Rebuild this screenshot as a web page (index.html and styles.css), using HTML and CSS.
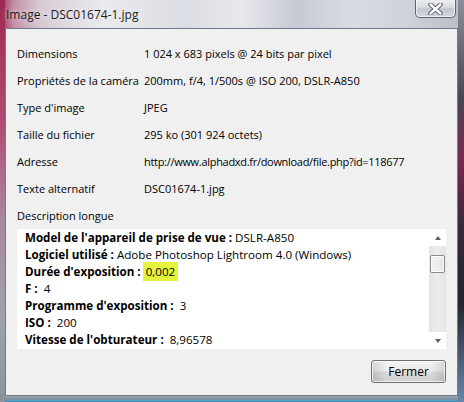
FILE: index.html
```html
<!DOCTYPE html>
<html lang="fr">
<head>
<meta charset="utf-8">
<title>Image - DSC01674-1.jpg</title>
<link rel="stylesheet" href="styles.css">
</head>
<body>
<div class="window">
  <div class="titlebar">
    <span class="title">Image - DSC01674-1.jpg</span>
    <button class="close" aria-label="Fermer">
      <svg width="17" height="12" viewBox="0 0 17 12">
        <path d="M3.5 1.5 L13.5 10.5 M13.5 1.5 L3.5 10.5" stroke="#5a5f6a" stroke-width="4.4" stroke-linecap="round"/>
        <path d="M3.5 1.5 L13.5 10.5 M13.5 1.5 L3.5 10.5" stroke="#ffffff" stroke-width="2.4" stroke-linecap="round"/>
      </svg>
    </button>
  </div>
  <div class="client">
    <div class="props">
      <div class="label">Dimensions</div><div class="value">1 024 x 683 pixels @ 24 bits par pixel</div>
      <div class="label">Propriétés de la caméra</div><div class="value">200mm, f/4, 1/500s @ ISO 200, DSLR-A850</div>
      <div class="label">Type d'image</div><div class="value">JPEG</div>
      <div class="label">Taille du fichier</div><div class="value">295 ko (301 924 octets)</div>
      <div class="label">Adresse</div><div class="value url">http://www.alphadxd.fr/download/file.php?id=118677</div>
      <div class="label">Texte alternatif</div><div class="value">DSC01674-1.jpg</div>
      <div class="label span">Description longue</div>
    </div>
    <div class="textbox">
      <div class="text">
        <div class="line"><b>Model de l'appareil de prise de vue :</b> DSLR-A850</div>
        <div class="line"><b>Logiciel utilisé :</b> Adobe Photoshop Lightroom 4.0 (Windows)</div>
        <div class="line"><b>Durée d'exposition :</b> <span class="hl">0,002</span></div>
        <div class="line"><b>F :</b>&nbsp; 4</div>
        <div class="line"><b>Programme d'exposition :</b>&nbsp; 3</div>
        <div class="line"><b>ISO :</b>&nbsp; 200</div>
        <div class="line"><b>Vitesse de l'obturateur :</b>&nbsp; 8,96578</div>
      </div>
      <div class="scrollbar">
        <div class="arrow"><span class="tri up"></span></div>
        <div class="track"><div class="thumb"></div></div>
        <div class="arrow"><span class="tri down"></span></div>
      </div>
    </div>
    <div class="actions">
      <button class="btn">Fermer</button>
    </div>
  </div>
</div>
</body>
</html>
```
FILE: styles.css
```css
* { box-sizing: border-box; }
html, body { margin: 0; padding: 0; }
body {
  width: 464px;
  height: 402px;
  overflow: hidden;
  font-family: "Open Sans", "Noto Sans", sans-serif;
  font-size: 11px;
  color: #000;
}
.window {
  width: 464px;
  height: 402px;
  display: flex;
  flex-direction: column;
  background:
    linear-gradient(#9c2a52, #b04a72 30%, #a88a9a 55%, #9ea2aa 80%, #8c929c) left top / 5px 100% no-repeat,
    linear-gradient(#8a8e98, #4a4452 25%, #7a2a52 40%, #3a2a3a 55%, #22242e 75%, #6a86a8) right top / 6px 100% no-repeat,
    linear-gradient(#a2a6ae 0, #8a8e98 50%, #3aa8e0 80%, #6a7480 100%) left bottom / 100% 6px no-repeat,
    linear-gradient(90deg, #a03058 0, #c290a8 3%, #d8ccd4 9%, #e9eaee 22%, #dadde3 40%, #e6e8ec 52%, #c6cad2 64%, #d8dbe1 76%, #cfd2d8 88%, #b8bcc4 100%);
}
.titlebar {
  height: 28px;
  display: flex;
  justify-content: space-between;
  align-items: flex-start;
  padding: 0 8px 0 6px;
}
.title {
  font-size: 12px;
  line-height: 30px;
  color: #1a1a1a;
  text-shadow: 0 0 6px rgba(255,255,255,0.9);
}
.close {
  width: 41px;
  height: 19px;
  margin-top: -1px;
  padding: 0;
  border: 1px solid #5e6470;
  border-top: none;
  border-radius: 0 0 5px 5px;
  background: linear-gradient(#eef0f3, #d9dce2 45%, #c2c7cf 55%, #d4d8de);
  box-shadow: inset 0 0 0 1px rgba(255,255,255,0.6);
  display: flex;
  align-items: center;
  justify-content: center;
}
.close svg { display: block; margin-top: 1px; }
.client {
  flex: 1;
  margin: 0 6px 6px 5px;
  border: 1px solid #6e7c8c;
  background: #f0f0f0;
  padding: 11px 11px 0 11px;
  display: flex;
  flex-direction: column;
}
.props {
  display: grid;
  grid-template-columns: 127px 1fr;
  grid-auto-rows: 27px;
  align-items: center;
  white-space: nowrap;
}
.url { letter-spacing: -0.3px; }
.span { grid-column: 1 / span 2; }
.textbox {
  height: 120px;
  display: flex;
  background: #fff;
}
.text {
  flex: 1;
  padding-left: 8px;
  overflow: hidden;
  white-space: nowrap;
  font-size: 11.6px;
}
.line { line-height: 17px; height: 17px; }
.line b { font-weight: 700; }
.hl {
  background: #e6f33c;
  padding: 2px 3px;
  margin-left: -1px;
}
.scrollbar {
  width: 17px;
  display: flex;
  flex-direction: column;
}
.arrow {
  height: 17px;
  display: flex;
  align-items: center;
  justify-content: center;
  background: #fff;
}
.tri { width: 0; height: 0; border-left: 3.5px solid transparent; border-right: 3.5px solid transparent; }
.tri.up { border-bottom: 4px solid #5e5e5e; }
.tri.down { border-top: 4px solid #5e5e5e; }
.track {
  flex: 1;
  background: linear-gradient(90deg, #e4e4e4, #ececec 50%, #e4e4e4);
  padding-top: 9px;
  display: flex;
  justify-content: center;
}
.thumb {
  width: 15px;
  height: 18px;
  border: 1px solid #8c8c8c;
  border-radius: 2px;
  background: linear-gradient(90deg, #f4f4f4, #e6e6e6);
  box-shadow: inset 0 0 0 1px #fff;
}
.actions {
  display: flex;
  justify-content: flex-end;
  margin-top: 11px;
}
.btn {
  width: 75px;
  height: 23px;
  padding: 0;
  font-family: inherit;
  font-size: 12px;
  color: #000;
  border: 1px solid #707070;
  border-radius: 3px;
  background:
    linear-gradient(90deg, rgba(0,0,0,0.12), rgba(0,0,0,0) 20%, rgba(0,0,0,0) 80%, rgba(0,0,0,0.12)),
    linear-gradient(#f4f4f4, #ebebeb 48%, #dbdbdb 52%, #cfcfcf);
  box-shadow: inset 0 0 0 1px rgba(255,255,255,0.7);
}
```
